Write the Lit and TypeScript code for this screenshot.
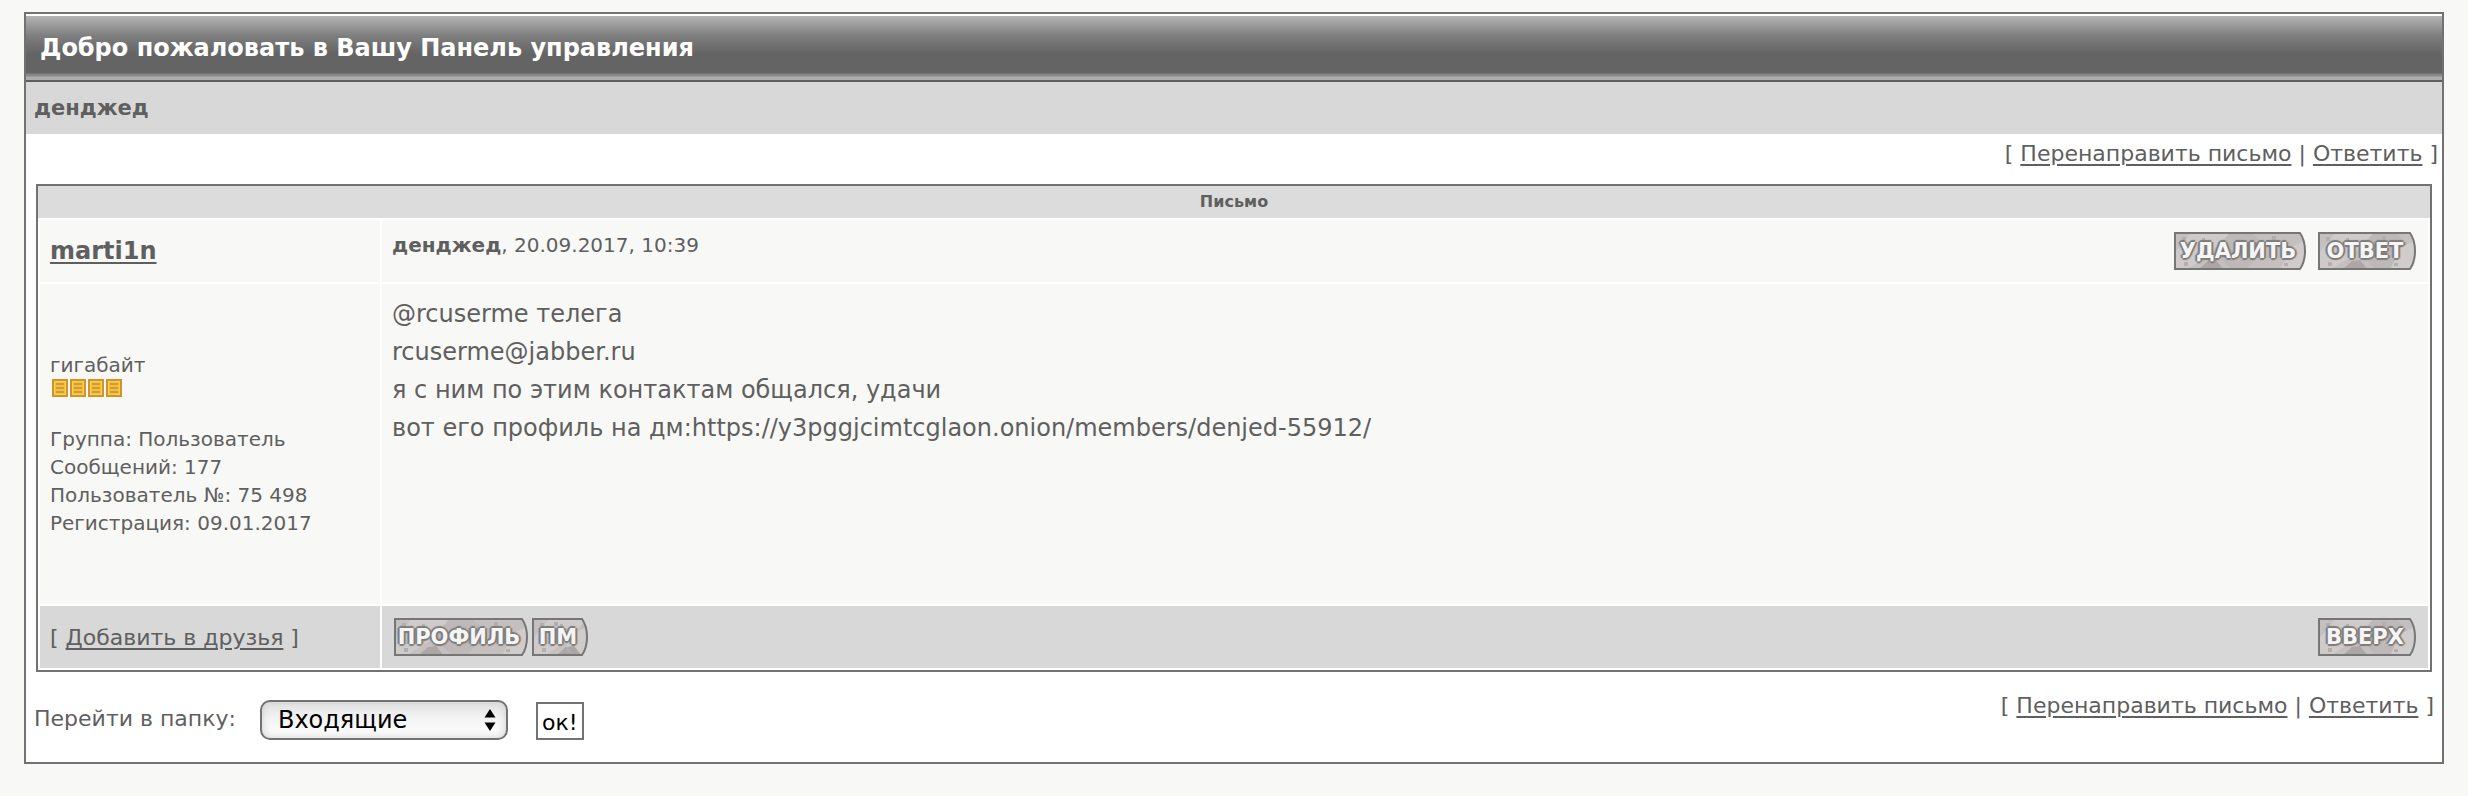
import { LitElement, html, css, svg } from "lit";
import { customElement, property } from "lit/decorators.js";

@customElement("stone-button")
class StoneButton extends LitElement {
  @property() label = "";
  @property({ type: Number }) width = 98;

  static styles = css`
    :host {
      display: block;
    }
    .btn {
      display: grid;
      align-items: center;
      justify-items: center;
      margin: 0;
      padding: 0;
      border: 0;
      background: none;
      color: #f6f5f5;
      font: bold 21px/30px "DejaVu Sans", sans-serif;
      cursor: pointer;
    }
    .plate,
    .label {
      grid-area: 1 / 1;
    }
    .plate {
      display: block;
    }
    .label {
      padding-right: 4px;
      text-shadow:
        2px 0 1px #7f7c7c,
        -2px 0 1px #7f7c7c,
        0 2px 1px #7f7c7c,
        0 -2px 1px #7f7c7c,
        1px 1px 1px #7f7c7c,
        -1px -1px 1px #7f7c7c;
    }
  `;

  render() {
    const w = this.width;
    const edge = `M1 1H${w - 6}Q${w - 1} 8 ${w - 1} 19T${w - 6} 37H1z`;
    return html`<button class="btn" type="button">
      <svg class="plate" width=${w} height="38" viewBox="0 0 ${w} 38" aria-hidden="true">
        <defs><clipPath id="edge"><path d=${edge}></path></clipPath></defs>
        <g clip-path="url(#edge)">
          <rect width=${w} height="38" fill="#c4c0bf"></rect>
          <path d="M18 0h38L34 24 12 38H0V22z" fill="#cfcbca"></path>
          <path d="M56 0h22l14 16-20 22H58L42 20z" fill="#bdb9b8"></path>
          <path d="M${w - 26} 38l10-22L${w} 8v30z" fill="#d0cccb"></path>
          <path d="M24 38l10-9 8-1 8 10z" fill="#aca7a6"></path>
          <path d="M8 5h4v4H8zM28 6h3v3h-3zM${w - 34} 4h4v4h-4zM${w - 22} 31h4v3h-4zM10 30h4v4h-4z" fill="#b3afae"></path>
        </g>
        <path d=${edge} fill="none" stroke="#777676" stroke-width="2"></path>
      </svg>
      <span class="label">${this.label}</span>
    </button>`;
  }
}

@customElement("letter-actions")
class LetterActions extends LitElement {
  static styles = css`
    :host {
      display: block;
      white-space: nowrap;
    }
    a {
      color: inherit;
      text-underline-offset: 3px;
    }
  `;

  render() {
    return html`[ <a href="#forward">Перенаправить письмо</a> | <a href="#reply">Ответить</a> ]`;
  }
}

@customElement("app-root")
class AppRoot extends LitElement {
  static styles = css`
    :host {
      display: block;
      box-sizing: border-box;
      min-height: 100vh;
      padding: 12px 24px 32px;
      background: #f8f8f6;
      color: #5f5f5f;
      font: 22px/28px Verdana, "DejaVu Sans", sans-serif;
    }
    a {
      color: inherit;
      text-underline-offset: 3px;
    }
    .panel {
      border: 2px solid #727272;
      background: #fff;
    }
    .title {
      margin: 2px 0 0;
      padding: 0 14px;
      border-bottom: 2px solid #5e5e5e;
      background: linear-gradient(#b3b3b3, #7e7e7e 20px, #646464 38px, #646464 57px, #858585 58px, #8a8a8a 60px, #adadad 61px);
      color: #fff;
      font-size: 24px;
      line-height: 64px;
    }
    .subject {
      margin: 0;
      padding: 0 8px;
      background: #d8d8d8;
      font-size: 21px;
      line-height: 52px;
    }
    .top {
      display: flex;
      justify-content: flex-end;
      padding: 6px 4px 16px;
    }
    .letter {
      margin: 0 10px;
      border: 2px solid #727272;
    }
    .caption {
      margin: 0;
      background: #dcdcdc;
      font-size: 16px;
      line-height: 32px;
      text-align: center;
    }
    .grid {
      width: 100%;
      table-layout: fixed;
      border-spacing: 2px;
    }
    .who {
      width: 340px;
    }
    td {
      padding: 0 10px;
      background: #f8f8f6;
      text-align: left;
      vertical-align: top;
    }
    .name {
      height: 62px;
      font-size: 24px;
      font-weight: bold;
      vertical-align: middle;
    }
    .bar {
      display: flex;
      justify-content: space-between;
      align-items: flex-start;
      padding: 12px 2px 12px 0;
    }
    .date {
      margin: 0;
      font-size: 20px;
      line-height: 26px;
    }
    .buttons {
      display: flex;
      gap: 12px;
    }
    .close {
      gap: 4px;
      padding-left: 2px;
    }
    .member {
      height: 320px;
      font-size: 20px;
      line-height: 28px;
      vertical-align: middle;
    }
    .rank,
    .facts {
      margin: 0;
      padding: 0;
      list-style: none;
    }
    .pips {
      display: block;
      margin-bottom: 28px;
    }
    .text {
      padding-top: 11px;
      font-size: 24px;
      line-height: 38px;
    }
    .text p {
      margin: 0;
    }
    .foot td {
      background: #d8d8d8;
    }
    .friend {
      padding-top: 2px;
      vertical-align: middle;
    }
    .bottom {
      display: flex;
      justify-content: space-between;
      align-items: flex-start;
      padding: 20px 8px 22px 8px;
    }
    .jump {
      display: flex;
      align-items: center;
      padding-top: 8px;
    }
    .jump label {
      padding-bottom: 2px;
    }
    .picker {
      position: relative;
      margin: 0 28px 0 24px;
    }
    .folder {
      display: block;
      box-sizing: border-box;
      width: 248px;
      height: 40px;
      padding: 0 36px 0 16px;
      border: 2px solid #727272;
      border-radius: 10px;
      appearance: none;
      background: linear-gradient(#e4e4e4, #f4f4f4 50%, #fff);
      box-shadow: inset 0 0 8px #ccc;
      color: #000;
      font: inherit;
      font-size: 24px;
    }
    .arrows {
      position: absolute;
      top: 8px;
      right: 12px;
      pointer-events: none;
    }
    .ok {
      box-sizing: border-box;
      height: 38px;
      margin-top: 2px;
      padding: 4px 4px 0;
      border: 2px solid #727272;
      background: #fff;
      color: #000;
      font: inherit;
    }
  `;

  private lines = [
    "@rcuserme телега",
    "rcuserme@jabber.ru",
    "я с ним по этим контактам общался, удачи",
    "вот его профиль на дм:https://y3pggjcimtcglaon.onion/members/denjed-55912/",
  ];

  private facts = [
    "Группа: Пользователь",
    "Сообщений: 177",
    "Пользователь №: 75 498",
    "Регистрация: 09.01.2017",
  ];

  private pip(i: number) {
    return svg`<g transform="translate(${2 + i * 18} 0)">
      <rect x="1" y="1" width="14" height="16" fill="#f6d347" stroke="#d1932f" stroke-width="2"></rect>
      <rect x="3" y="3" width="10" height="12" fill="#efc042"></rect>
      <path d="M4 5h8M4 9h8M4 13h8" stroke="#d39a35" stroke-width="2"></path>
    </g>`;
  }

  render() {
    return html`
      <main class="panel">
        <h1 class="title">Добро пожаловать в Вашу Панель управления</h1>
        <h2 class="subject">денджед</h2>
        <div class="top"><letter-actions></letter-actions></div>
        <section class="letter">
          <h3 class="caption">Письмо</h3>
          <table class="grid">
            <colgroup><col class="who" /><col /></colgroup>
            <tbody>
              <tr>
                <td class="name"><a href="#user">marti1n</a></td>
                <td>
                  <div class="bar">
                    <p class="date"><b>денджед</b>, 20.09.2017, 10:39</p>
                    <div class="buttons">
                      <stone-button label="УДАЛИТЬ" width="132"></stone-button>
                      <stone-button label="ОТВЕТ"></stone-button>
                    </div>
                  </div>
                </td>
              </tr>
              <tr>
                <td class="member">
                  <p class="rank">гигабайт</p>
                  <svg class="pips" width="76" height="18" viewBox="0 0 76 18" aria-hidden="true">
                    ${[0, 1, 2, 3].map((i) => this.pip(i))}
                  </svg>
                  <ul class="facts">${this.facts.map((f) => html`<li>${f}</li>`)}</ul>
                </td>
                <td class="text">${this.lines.map((l) => html`<p>${l}</p>`)}</td>
              </tr>
              <tr class="foot">
                <td class="friend">[ <a href="#friend">Добавить в друзья</a> ]</td>
                <td>
                  <div class="bar">
                    <div class="buttons close">
                      <stone-button label="ПРОФИЛЬ" width="134"></stone-button>
                      <stone-button label="ПМ" width="56"></stone-button>
                    </div>
                    <stone-button label="ВВЕРХ"></stone-button>
                  </div>
                </td>
              </tr>
            </tbody>
          </table>
        </section>
        <div class="bottom">
          <form class="jump" @submit=${(e: Event) => e.preventDefault()}>
            <label for="folder">Перейти в папку:</label>
            <span class="picker">
              <select class="folder" id="folder"><option>Входящие</option></select>
              <svg class="arrows" width="12" height="24" viewBox="0 0 12 24" aria-hidden="true">
                <path d="M6 1l5.500 8.500H.5zM6 23L.5 14.500h11z" fill="#000"></path>
              </svg>
            </span>
            <button class="ok" type="submit">ок!</button>
          </form>
          <letter-actions></letter-actions>
        </div>
      </main>
    `;
  }
}
